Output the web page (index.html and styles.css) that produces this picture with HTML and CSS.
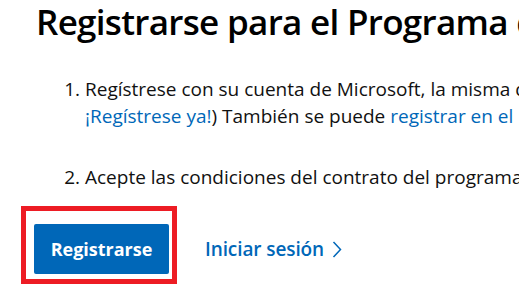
FILE: index.html
```html
<!DOCTYPE html>
<html lang="es">
<head>
<meta charset="utf-8">
<title>Registrarse para el Programa</title>
<link rel="stylesheet" href="styles.css">
</head>
<body>
<main class="page">
  <h1 class="title">Registrarse para el Programa de Windows Insider</h1>
  <ol class="steps">
    <li class="step">Regístrese con su cuenta de Microsoft, la misma que usa para Office, Outlook o Skype. (¿No tiene cuenta?<br><a class="link" href="#">¡Regístrese ya!</a>) También se puede <a class="link" href="#">registrar en el Programa Windows Insider</a> con su cuenta.</li>
    <li class="step">Acepte las condiciones del contrato del programa y la declaración de privacidad.</li>
  </ol>
  <div class="actions">
    <div class="highlight">
      <a class="btn-primary" href="#">Registrarse</a>
    </div>
    <a class="link-action" href="#">Iniciar sesión
      <svg class="chev" width="10" height="17" viewBox="0 0 10 17" aria-hidden="true"><path d="M1.5 1 L8.5 8.5 L1.5 16" fill="none" stroke="currentColor" stroke-width="1.5"/></svg>
    </a>
  </div>
</main>
</body>
</html>
```

FILE: styles.css
```css
html, body {
  margin: 0;
  padding: 0;
  background: #fff;
  overflow: hidden;
}
body {
  width: 519px;
  height: 285px;
  font-family: "Open Sans", "Noto Sans", "DejaVu Sans", sans-serif;
  color: #000;
}
.page {
  width: 1100px;
  padding-left: 36px;
}
.title {
  margin: 0;
  font-size: 35px;
  font-weight: 600;
  line-height: 44px;
  white-space: nowrap;
  letter-spacing: -0.7px;
}
.steps {
  margin: 32px 0 0;
  padding-left: 49px;
  font-size: 19px;
  line-height: 27px;
  white-space: nowrap;
  color: #111;
}
.step + .step {
  margin-top: 34px;
}
.link {
  color: #0067b8;
  text-decoration: none;
}
.actions {
  display: flex;
  align-items: center;
  margin-top: 15px;
  margin-left: -15px;
}
.highlight {
  border: 5px solid #ed1c24;
  padding: 13px 3px 5px 8px;
}
.btn-primary {
  display: flex;
  align-items: center;
  justify-content: center;
  width: 135px;
  height: 50px;
  background: #0067b8;
  color: #fff;
  border-radius: 2px;
  font-size: 18px;
  font-weight: 700;
  text-decoration: none;
}
.link-action {
  display: flex;
  align-items: center;
  gap: 8px;
  margin-left: 28px;
  margin-top: 8px;
  color: #0067b8;
  font-size: 19px;
  font-weight: 600;
  text-decoration: none;
  letter-spacing: -0.1px;
}
.chev {
  display: block;
}
```
